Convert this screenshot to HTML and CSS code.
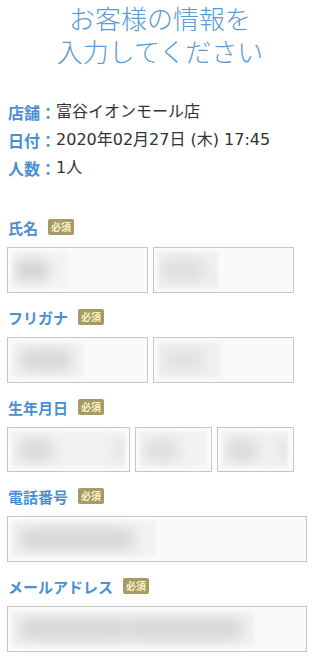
FILE: index.html
```html
<!DOCTYPE html>
<html lang="ja">
<head>
<meta charset="utf-8">
<title>お客様の情報を入力してください</title>
<link rel="stylesheet" href="styles.css">
</head>
<body>
<main class="page">
  <h1 class="title"><span class="title-line">お客様の情報を</span><span class="title-line">入力してください</span></h1>
  <dl class="info">
    <div class="info-row"><dt>店舗：</dt><dd>富谷イオンモール店</dd></div>
    <div class="info-row"><dt>日付：</dt><dd>2020年02月27日 (木) 17:45</dd></div>
    <div class="info-row"><dt>人数：</dt><dd>1人</dd></div>
  </dl>

  <section class="field">
    <div class="label">氏名<span class="req">必須</span></div>
    <div class="row row-two">
      <div class="box"><div class="fill fill-n1"><span class="blob blob-n1"></span></div></div>
      <div class="box"><div class="fill fill-n2"><span class="blob blob-n2"></span></div></div>
    </div>
  </section>

  <section class="field">
    <div class="label">フリガナ<span class="req">必須</span></div>
    <div class="row row-two">
      <div class="box"><div class="fill fill-k1"><span class="blob blob-k1"></span></div></div>
      <div class="box"><div class="fill fill-k2"><span class="blob blob-k2"></span></div></div>
    </div>
  </section>

  <section class="field">
    <div class="label">生年月日<span class="req">必須</span></div>
    <div class="row row-three">
      <div class="box box-short"><div class="fill fill-d1"><span class="blob blob-d1"></span><span class="blob blob-arrow"></span></div></div>
      <div class="box box-short"><div class="fill fill-d2"><span class="blob blob-d2"></span></div></div>
      <div class="box box-short"><div class="fill fill-d3"><span class="blob blob-d3"></span><span class="blob blob-arrow"></span></div></div>
    </div>
  </section>

  <section class="field">
    <div class="label">電話番号<span class="req">必須</span></div>
    <div class="row">
      <div class="box box-full"><div class="fill fill-tel"><span class="blob blob-tel"></span></div></div>
    </div>
  </section>

  <section class="field">
    <div class="label">メールアドレス<span class="req">必須</span></div>
    <div class="row">
      <div class="box box-full"><div class="fill fill-mail"><span class="blob blob-mail1"></span><span class="blob blob-mail2"></span></div></div>
    </div>
  </section>
</main>
</body>
</html>
```

FILE: styles.css
```css
* { box-sizing: border-box; }
html, body { margin: 0; padding: 0; background: #fff; }
body {
  font-family: "Noto Sans CJK JP", "Noto Sans", sans-serif;
  color: #333;
  overflow: hidden;
}
.page { padding: 1px 13px 0 7px; }

.title {
  margin: 0 0 0 6px;
  font-size: 26px;
  font-weight: 300;
  color: #5b9bd5;
  text-align: center;
}
.title-line { display: block; height: 33px; line-height: 33px; }

.info { margin: 31px 0 34px 1px; padding: 0; }
.info-row { display: flex; font-size: 16px; line-height: 28px; height: 28px; }
.info dt { font-weight: bold; color: #4a8fd4; margin: 0; }
.info dd {
  margin: 0;
  color: #333;
  font-family: "DejaVu Sans", "Noto Sans CJK JP", sans-serif;
}

.field { margin-bottom: 13px; }
.label {
  display: flex;
  align-items: center;
  height: 22px;
  margin: 0 0 9px 1px;
  font-size: 15px;
  font-weight: bold;
  color: #4a8fd4;
}
.req {
  display: inline-block;
  margin-left: 10px;
  padding: 0 3px;
  height: 16px;
  line-height: 16px;
  font-size: 10px;
  font-weight: bold;
  color: #fbf3c8;
  background: #a69b65;
  border-radius: 2px;
}

.row { display: grid; gap: 5px; }
.row-two { grid-template-columns: 141px 141px; }
.row-three { grid-template-columns: 123px 77px 77px; }

.box {
  height: 46px;
  border: 1px solid #c6c6c6;
  background: #fafafa;
  padding: 4px;
  overflow: hidden;
}
.box-short { height: 45px; }
.fill {
  position: relative;
  height: 100%;
  background: #f4f4f4;
  overflow: hidden;
  filter: blur(1.5px);
}
.blob {
  position: absolute;
  top: 50%;
  height: 22px;
  margin-top: -11px;
  border-radius: 11px;
  background: #d8d8d8;
  filter: blur(7px);
}

.fill-n1 { width: 56px; }
.blob-n1 { left: 2px; width: 36px; background: #d2d2d2; }
.fill-n2 { width: 60px; background: #f0f0f0; }
.blob-n2 { left: 2px; width: 46px; background: #dedede; }

.fill-k1 { width: 72px; }
.blob-k1 { left: 6px; width: 56px; background: #d6d6d6; }
.fill-k2 { width: 63px; background: #f1f1f1; }
.blob-k2 { left: 2px; width: 46px; background: #e2e2e2; }

.fill-d1 { width: 113px; background: #f2f2f2; }
.blob-d1 { left: 6px; width: 36px; background: #d8d8d8; }
.blob-arrow { right: -2px; width: 12px; background: #e0e0e0; }
.fill-d2 { width: 67px; background: #f2f2f2; }
.blob-d2 { left: 4px; width: 34px; background: #dcdcdc; }
.fill-d3 { width: 66px; background: #f2f2f2; }
.blob-d3 { left: 4px; width: 32px; background: #d8d8d8; }

.fill-tel { width: 144px; background: #f3f3f3; }
.blob-tel { left: 6px; width: 118px; background: #d6d6d6; }

.fill-mail { width: 243px; background: #f3f3f3; }
.blob-mail1 { left: 6px; width: 112px; background: #d6d6d6; }
.blob-mail2 { left: 112px; width: 120px; background: #d6d6d6; }
```
